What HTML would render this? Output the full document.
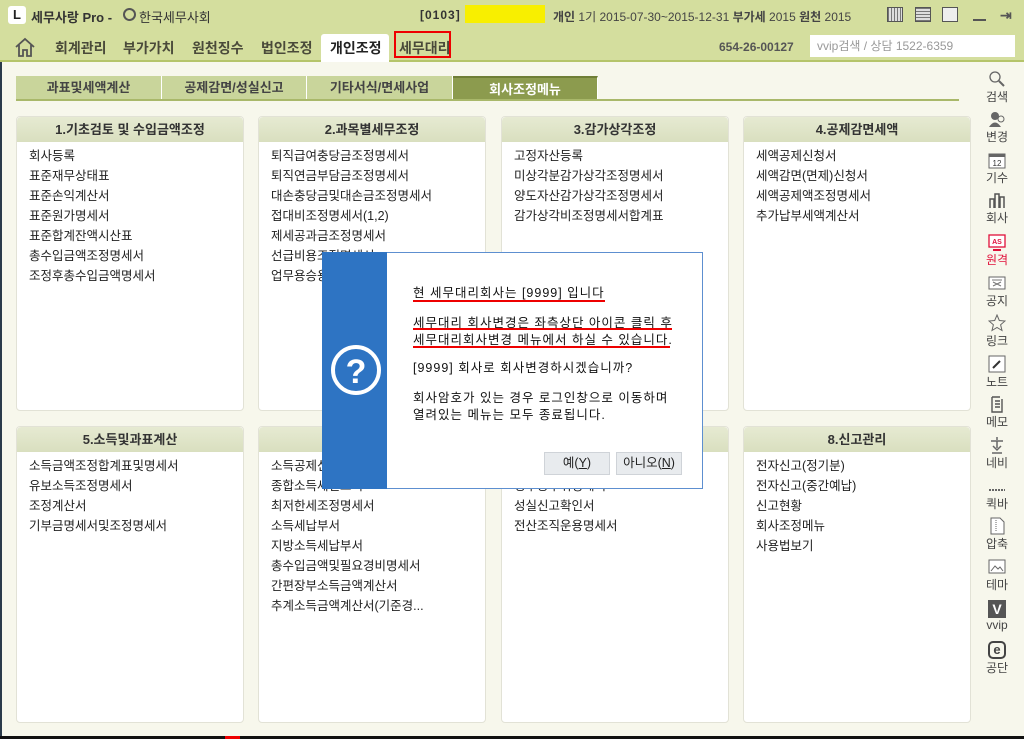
<!DOCTYPE html>
<html><head><meta charset="utf-8">
<style>
*{margin:0;padding:0;box-sizing:border-box}
body{width:1024px;height:739px;overflow:hidden;background:#f7f7ec;font-family:"Liberation Sans","Noto Sans CJK KR","NanumGothic",sans-serif;font-size:12px;color:#222;position:relative}
.a{position:absolute}
.top{left:0;top:0;width:1024px;height:62px;background:#d4de9e;border-bottom:2px solid #b5c46a}
.nav{font-size:14px;font-weight:bold;color:#4a4a3a;top:38px}
.panel{background:#fff;border:1px solid #e2e2d6;border-radius:4px}
.ph{position:absolute;left:0;top:0;right:0;height:25px;background:linear-gradient(#e6ead2,#d9dfbf);text-align:center;font-weight:bold;font-size:13px;line-height:25px;color:#333;border-radius:4px 4px 0 0}
.items{position:absolute;left:12px;top:29px;line-height:20px;font-size:12.5px;color:#222;white-space:nowrap}
.tab{top:76px;height:24px;background:#c9d59b;text-align:center;line-height:24px;font-weight:bold;font-size:13px;color:#444;border-right:1px solid #fff}
.side{left:976px;width:42px;text-align:center;font-size:12px;color:#444}
.ic{display:block;margin:0 auto;width:18px;height:18px}
.dl{font-size:12.5px;color:#111;left:413px;white-space:nowrap;letter-spacing:1px}
.red{position:absolute;height:2px;background:#e00}
.btn{top:452px;height:23px;background:#e8ebee;border:1px solid #cfd3d8;text-align:center;line-height:21px;font-size:12.5px}
</style></head><body>
<div class="a" style="left:0;top:0;width:2px;height:739px;background:#2a3a4a"></div>
<div class="a top"></div>
<div class="a" style="left:8px;top:6px;width:18px;height:18px;background:#fff;border-radius:3px;font-weight:bold;font-size:13px;text-align:center;line-height:18px;color:#222">L</div>
<div class="a" style="left:31px;top:7px;font-weight:bold;font-size:13px;color:#333">세무사랑 Pro - </div>
<div class="a" style="left:123px;top:8px;width:13px;height:13px;border:2px solid #555;border-radius:50%"></div>
<div class="a" style="left:139px;top:7px;font-size:13px;color:#333">한국세무사회</div>
<div class="a" style="left:420px;top:8px;font-weight:bold;font-size:12px;color:#333;letter-spacing:1px">[0103]</div>
<div class="a" style="left:465px;top:5px;width:80px;height:18px;background:#f8ef00"></div>
<div class="a" style="left:553px;top:8px;font-size:12px;color:#444;white-space:nowrap"><b>개인</b> 1기 2015-07-30~2015-12-31 <b>부가세</b> 2015 <b>원천</b> 2015</div>
<div class="a" style="left:887px;top:7px;width:16px;height:15px;border:1px solid #555;background:repeating-linear-gradient(90deg,#777 0 1px,#ddd 1px 3px)"></div>
<div class="a" style="left:915px;top:7px;width:16px;height:15px;border:1px solid #555;background:repeating-linear-gradient(0deg,#777 0 1px,#ddd 1px 3px)"></div>
<div class="a" style="left:942px;top:7px;width:16px;height:15px;border:1px solid #555;background:#eee"></div>
<div class="a" style="left:973px;top:19px;width:13px;height:2px;background:#555"></div>
<div class="a" style="left:1000px;top:7px;font-size:14px;color:#555;font-weight:bold">⇥</div>
<svg class="a" style="left:14px;top:36px" width="22" height="22" viewBox="0 0 22 22"><path d="M2 11 L11 3 L20 11 M5 9 V20 H9 V14 H13 V20 H17 V9" fill="none" stroke="#555" stroke-width="1.8"/></svg>
<div class="a nav" style="left:55px">회계관리</div>
<div class="a nav" style="left:123px">부가가치</div>
<div class="a nav" style="left:192px">원천징수</div>
<div class="a nav" style="left:261px">법인조정</div>
<div class="a" style="left:321px;top:34px;width:68px;height:28px;background:#fff;border-radius:3px 3px 0 0"></div>
<div class="a nav" style="left:330px;color:#222">개인조정</div>
<div class="a" style="left:394px;top:31px;width:57px;height:27px;border:2px solid #e00"></div>
<div class="a nav" style="left:399px">세무대리</div>
<div class="a" style="left:719px;top:40px;font-weight:bold;font-size:12px;color:#555">654-26-00127</div>
<div class="a" style="left:810px;top:35px;width:205px;height:22px;background:#fff;color:#999;font-size:12px;line-height:22px;padding-left:7px">vvip검색 / 상담 1522-6359</div>

<div class="a tab" style="left:16px;width:146px">과표및세액계산</div>
<div class="a tab" style="left:162px;width:145px">공제감면/성실신고</div>
<div class="a tab" style="left:307px;width:146px">기타서식/면세사업</div>
<div class="a tab" style="left:453px;width:145px;background:#8c9b4e;color:#fff;border-top:2px solid #6f7e36">회사조정메뉴</div>
<div class="a" style="left:16px;top:99px;width:943px;height:2px;background:#a9b86a"></div>

<div class="a panel" style="left:16px;top:116px;width:228px;height:295px"><div class="ph">1.기초검토 및 수입금액조정</div><div class="items">회사등록<br>표준재무상태표<br>표준손익계산서<br>표준원가명세서<br>표준합계잔액시산표<br>총수입금액조정명세서<br>조정후총수입금액명세서</div></div>
<div class="a panel" style="left:258px;top:116px;width:228px;height:295px"><div class="ph">2.과목별세무조정</div><div class="items">퇴직급여충당금조정명세서<br>퇴직연금부담금조정명세서<br>대손충당금및대손금조정명세서<br>접대비조정명세서(1,2)<br>제세공과금조정명세서<br>선급비용조정명세서<br>업무용승용차관련비용명세서</div></div>
<div class="a panel" style="left:501px;top:116px;width:228px;height:295px"><div class="ph">3.감가상각조정</div><div class="items">고정자산등록<br>미상각분감가상각조정명세서<br>양도자산감가상각조정명세서<br>감가상각비조정명세서합계표</div></div>
<div class="a panel" style="left:743px;top:116px;width:228px;height:295px"><div class="ph">4.공제감면세액</div><div class="items">세액공제신청서<br>세액감면(면제)신청서<br>세액공제액조정명세서<br>추가납부세액계산서</div></div>

<div class="a panel" style="left:16px;top:426px;width:228px;height:297px"><div class="ph">5.소득및과표계산</div><div class="items">소득금액조정합계표및명세서<br>유보소득조정명세서<br>조정계산서<br>기부금명세서및조정명세서</div></div>
<div class="a panel" style="left:258px;top:426px;width:228px;height:297px"><div class="ph">6.세액계산</div><div class="items">소득공제신고서<br>종합소득세신고서<br>최저한세조정명세서<br>소득세납부서<br>지방소득세납부서<br>총수입금액및필요경비명세서<br>간편장부소득금액계산서<br>추계소득금액계산서(기준경...</div></div>
<div class="a panel" style="left:501px;top:426px;width:228px;height:297px"><div class="ph">7.부속명세서</div><div class="items">사업소득명세서<br>영수증수취명세서<br>성실신고확인서<br>전산조직운용명세서</div></div>
<div class="a panel" style="left:743px;top:426px;width:228px;height:297px"><div class="ph">8.신고관리</div><div class="items">전자신고(정기분)<br>전자신고(중간예납)<br>신고현황<br>회사조정메뉴<br>사용법보기</div></div>

<!-- sidebar -->
<div class="a side" style="top:70px"><svg class="ic" viewBox="0 0 18 18"><circle cx="7" cy="7" r="5" fill="none" stroke="#666" stroke-width="1.3"/><path d="M11 11 L16 16" stroke="#666" stroke-width="2"/></svg>검색</div>
<div class="a side" style="top:110px"><svg class="ic" viewBox="0 0 18 18"><circle cx="7" cy="6" r="4" fill="#666"/><path d="M1 17 Q7 8 13 17Z" fill="#666"/><circle cx="13" cy="9" r="3" fill="none" stroke="#666"/></svg>변경</div>
<div class="a side" style="top:151px"><svg class="ic" viewBox="0 0 18 18"><rect x="1" y="3" width="16" height="14" fill="#fff" stroke="#666"/><rect x="1" y="3" width="16" height="3" fill="#666"/><text x="9" y="15" font-size="8" text-anchor="middle" fill="#333">12</text></svg>기수</div>
<div class="a side" style="top:191px"><svg class="ic" viewBox="0 0 18 18"><path d="M2 17V8H6V17M7 17V3H11V17M12 17V6H16V17" fill="none" stroke="#555" stroke-width="1.5"/></svg>회사</div>
<div class="a side" style="top:233px;color:#e0103a"><svg class="ic" viewBox="0 0 18 18"><rect x="1" y="2" width="16" height="12" fill="#fff" stroke="#e0103a" stroke-width="1.3"/><text x="9" y="11" font-size="7" text-anchor="middle" fill="#e0103a" font-weight="bold">AS</text><path d="M5 17H13" stroke="#e0103a" stroke-width="2"/></svg>원격</div>
<div class="a side" style="top:274px"><svg class="ic" viewBox="0 0 18 18"><rect x="1" y="3" width="16" height="12" fill="#fff" stroke="#666"/><path d="M4 6H14M5 12L13 8M5 8L13 12" stroke="#777"/></svg>공지</div>
<div class="a side" style="top:314px"><svg class="ic" viewBox="0 0 18 18"><path d="M9 1 L11.3 6.5 L17 7 L12.6 10.8 L14 16.5 L9 13.5 L4 16.5 L5.4 10.8 L1 7 L6.7 6.5Z" fill="none" stroke="#666"/></svg>링크</div>
<div class="a side" style="top:355px"><svg class="ic" viewBox="0 0 18 18"><rect x="1" y="1" width="16" height="16" fill="#fff" stroke="#666"/><path d="M5 13L12 6" stroke="#333" stroke-width="2"/></svg>노트</div>
<div class="a side" style="top:395px"><svg class="ic" viewBox="0 0 18 18"><path d="M4 2V17H14V4M4 2H12M7 6H12M7 9H12M7 12H12" fill="none" stroke="#555" stroke-width="1.4"/></svg>메모</div>
<div class="a side" style="top:436px"><svg class="ic" viewBox="0 0 18 18"><path d="M9 1V4M3 5H15M9 5V12M5 10L9 14L13 10M4 17H14" fill="none" stroke="#666" stroke-width="1.5"/></svg>네비</div>
<div class="a side" style="top:477px"><svg class="ic" viewBox="0 0 18 18"><path d="M1 13H17" stroke="#666" stroke-width="2" stroke-dasharray="2 1"/></svg>퀵바</div>
<div class="a side" style="top:517px"><svg class="ic" viewBox="0 0 18 18"><path d="M3 1H12L16 5V17H3Z" fill="#fff" stroke="#666"/><path d="M8 3V14" stroke="#666" stroke-dasharray="1 1"/></svg>압축</div>
<div class="a side" style="top:558px"><svg class="ic" viewBox="0 0 18 18"><rect x="1" y="2" width="16" height="13" fill="#fff" stroke="#666"/><path d="M3 13L7 8L10 11L12 9L15 13" fill="none" stroke="#666"/></svg>테마</div>
<div class="a side" style="top:600px"><div style="width:18px;height:18px;margin:0 auto;background:#555;color:#fff;font-weight:bold;font-size:14px;line-height:18px">V</div>vvip</div>
<div class="a side" style="top:641px"><div style="width:18px;height:18px;margin:0 auto;border:2px solid #444;border-radius:5px;font-weight:bold;font-size:13px;line-height:13px">e</div>공단</div>

<div class="a" style="left:0;top:736px;width:1024px;height:3px;background:#111"></div>
<div class="a" style="left:225px;top:736px;width:15px;height:3px;background:#e00"></div>

<!-- dialog -->
<div class="a" style="left:322px;top:252px;width:381px;height:237px;background:#fff;border:1px solid #5d8fd0"></div>
<div class="a" style="left:322px;top:252px;width:65px;height:237px;background:#2e74c3"></div>
<svg class="a" style="left:329px;top:343px" width="54" height="54" viewBox="0 0 54 54"><circle cx="27" cy="27" r="23" fill="none" stroke="#fff" stroke-width="4"/><text x="27" y="40" font-size="34" font-weight="bold" text-anchor="middle" fill="#fff" font-family="Liberation Sans">?</text></svg>
<div class="a dl" style="top:282px">현 세무대리회사는 [9999] 입니다</div>
<div class="red" style="left:413px;top:300px;width:192px"></div>
<div class="a dl" style="top:312px">세무대리 회사변경은 좌측상단 아이콘 클릭 후</div>
<div class="red" style="left:413px;top:328px;width:259px"></div>
<div class="a dl" style="top:329px">세무대리회사변경 메뉴에서 하실 수 있습니다.</div>
<div class="red" style="left:413px;top:346px;width:257px"></div>
<div class="a dl" style="top:357px">[9999] 회사로 회사변경하시겠습니까?</div>
<div class="a dl" style="top:387px">회사암호가 있는 경우 로그인창으로 이동하며</div>
<div class="a dl" style="top:404px">열려있는 메뉴는 모두 종료됩니다.</div>
<div class="a btn" style="left:544px;width:66px">예(<u>Y</u>)</div>
<div class="a btn" style="left:616px;width:66px">아니오(<u>N</u>)</div>
</body></html>
